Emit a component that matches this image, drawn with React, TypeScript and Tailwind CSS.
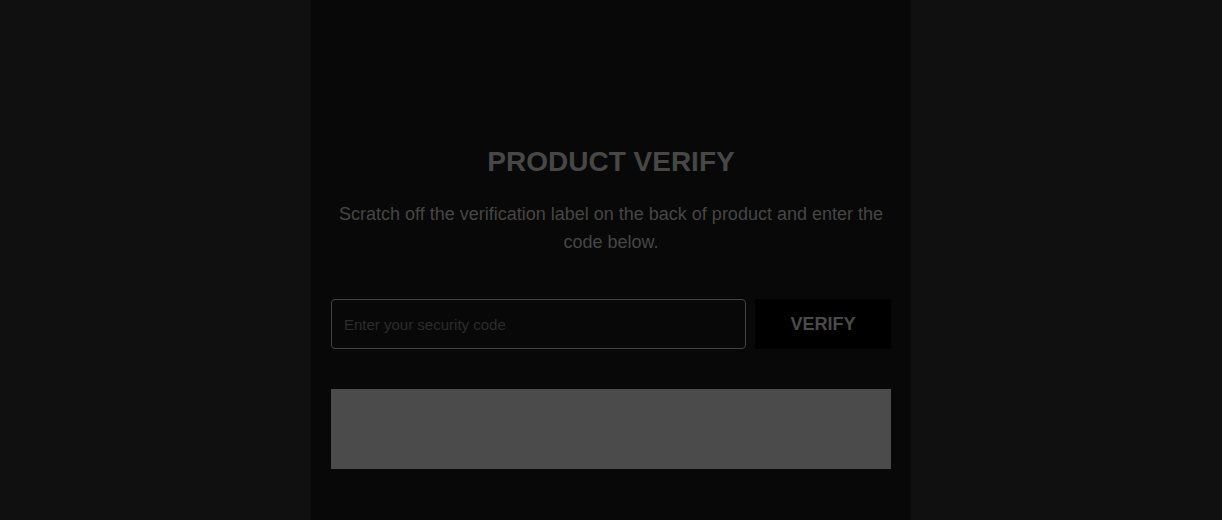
import React from "react";

export default function App() {
  return (
    <div
      className="min-h-[520px] w-full bg-[#101010] flex justify-center"
      style={{ fontFamily: '"Liberation Sans", Arial, sans-serif' }}
    >
      <div className="w-[600px] min-h-[520px] bg-[#080808] px-5 pt-[145px] pb-[51px] flex flex-col">
        <h1 className="text-[28px] leading-[1.2] font-bold text-center text-[#474747]">
          PRODUCT VERIFY
        </h1>
        <p className="mt-[21px] text-[18px] leading-[1.6] text-center text-[#464646]">
          Scratch off the verification label on the back of product and enter the code below.
        </p>
        <div className="mt-[42px] flex gap-[9px]">
          <input
            type="text"
            placeholder="Enter your security code"
            className="w-[415px] h-[50px] rounded-[4px] border border-[#424242] bg-[#080808] px-3 text-[15px] text-[#555] placeholder:text-[#2c2c2c] outline-none"
          />
          <button className="w-[136px] h-[50px] rounded-[3px] bg-black text-[18px] font-bold text-[#4a4a4a]">
            VERIFY
          </button>
        </div>
        <div className="mt-[40px] h-[80px] w-full bg-[#4b4b4b]" />
      </div>
    </div>
  );
}
